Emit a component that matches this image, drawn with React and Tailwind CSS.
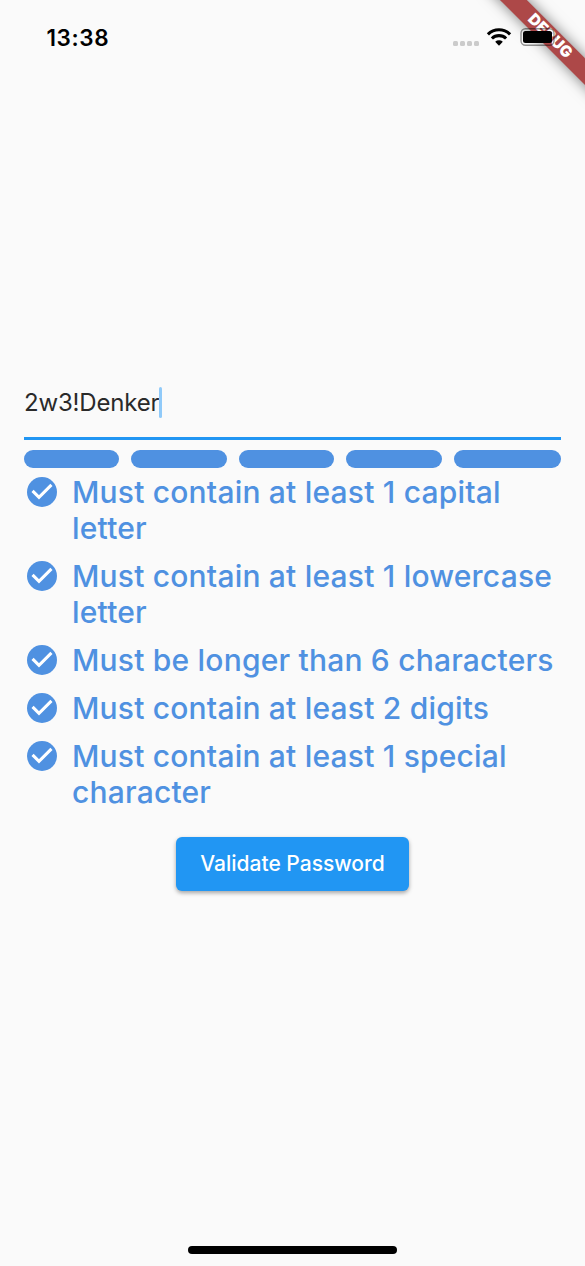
const rules = [
  'Must contain at least 1 capital letter',
  'Must contain at least 1 lowercase letter',
  'Must be longer than 6 characters',
  'Must contain at least 2 digits',
  'Must contain at least 1 special character',
];

function CheckCircle() {
  return (
    <svg viewBox="0 0 24 24" className="h-9 w-9 shrink-0" fill="none">
      <circle cx="12" cy="12" r="10" fill="#4f91e1" />
      <path d="M5.7 11.3l4.3 4.3 8.3-8.3" stroke="#fff" strokeWidth="2.05" />
    </svg>
  );
}

function WifiIcon() {
  return (
    <svg viewBox="0 0 26 20" className="h-5 w-[26px]" fill="none" stroke="#000" strokeWidth="3.1">
      <path d="M1.9 7.3a15.8 15.8 0 0 1 22.2 0" />
      <path d="M5.9 11.5a10.2 10.2 0 0 1 14.2 0" />
      <path d="M9.2 14.8a5.6 5.6 0 0 1 7.6 0L13 18.7z" fill="#000" stroke="none" />
    </svg>
  );
}

function BatteryIcon() {
  return (
    <svg viewBox="0 0 38 20" className="h-5 w-[38px]">
      <rect x="1" y="1.7" width="33" height="16.6" rx="4.5" fill="none" stroke="#000" strokeOpacity=".42" strokeWidth="1.4" />
      <rect x="3" y="4" width="29" height="12" rx="2.5" fill="#000" />
      <path d="M35.6 7.5c1.4.5 1.4 4.5 0 5z" fill="#000" fillOpacity=".4" />
    </svg>
  );
}

function DebugBanner() {
  return (
    <div className="absolute top-0 right-0 h-[120px] w-[120px] overflow-hidden">
      <div className="absolute top-[26.7px] left-[5px] flex h-[18.5px] w-[160px] rotate-45 items-center justify-center bg-[#ad4848] shadow-[0_0_14px_rgba(0,0,0,0.5)]">
        <span className="text-[15.6px] leading-none font-black tracking-[0.3px] text-white">DEBUG</span>
      </div>
    </div>
  );
}

export default function App() {
  return (
    <div className="relative flex h-[1266px] w-[585px] flex-col overflow-hidden bg-[#fafafa] font-['Inter','Liberation_Sans',sans-serif]">
      <DebugBanner />
      <header className="relative flex h-[72px] shrink-0 items-center justify-between pr-[27px] pl-[46.5px]">
        <time className="pt-[4px] text-[22.5px] font-semibold tracking-[0.6px] text-black">13:38</time>
        <div className="flex items-center pt-[2px]">
          <div className="mt-[12px] mr-[7px] flex gap-[2px]">
            <i className="h-[5px] w-[5px] rounded-[1.5px] bg-[#cbcbcb]" />
            <i className="h-[5px] w-[5px] rounded-[1.5px] bg-[#cbcbcb]" />
            <i className="h-[5px] w-[5px] rounded-[1.5px] bg-[#cbcbcb]" />
            <i className="h-[5px] w-[5px] rounded-[1.5px] bg-[#cbcbcb]" />
          </div>
          <WifiIcon />
          <div className="ml-2">
            <BatteryIcon />
          </div>
        </div>
      </header>

      <main className="flex flex-1 flex-col px-6 pt-[300px]">
        <div className="flex h-[67.5px] items-start border-b-[3px] border-[#2196f3] pt-[14.5px]">
          <span className="text-[24px] leading-[31px] tracking-[-0.17px] text-[#2a2a2a]">2w3!Denker</span>
          <span className="h-[31px] w-[3px] rounded-full bg-[#90caf9]" />
        </div>

        <div className="mt-[10.5px] flex">
          <div className="w-1/5 pr-3"><div className="h-[18px] rounded-full bg-[#4f91e1]" /></div>
          <div className="w-1/5 pr-3"><div className="h-[18px] rounded-full bg-[#4f91e1]" /></div>
          <div className="w-1/5 pr-3"><div className="h-[18px] rounded-full bg-[#4f91e1]" /></div>
          <div className="w-1/5 pr-3"><div className="h-[18px] rounded-full bg-[#4f91e1]" /></div>
          <div className="w-1/5"><div className="h-[18px] rounded-full bg-[#4f91e1]" /></div>
        </div>

        <ul className="mt-[6px] flex flex-col gap-3">
          {rules.map((rule) => (
            <li key={rule} className="flex gap-3">
              <CheckCircle />
              <span className="text-[30px] leading-9 font-medium tracking-[0.2px] text-[#4f91e1]">{rule}</span>
            </li>
          ))}
        </ul>

        <button className="mt-[27px] h-[54px] w-[233px] self-center rounded-[6px] bg-[#2196f3] text-[21px] font-medium whitespace-nowrap text-white shadow-[0_2px_4px_rgba(0,0,0,0.35)]">
          Validate Password
        </button>
      </main>

      <div className="mb-[12px] h-2 w-[209px] shrink-0 self-center rounded-full bg-black" />
    </div>
  );
}
